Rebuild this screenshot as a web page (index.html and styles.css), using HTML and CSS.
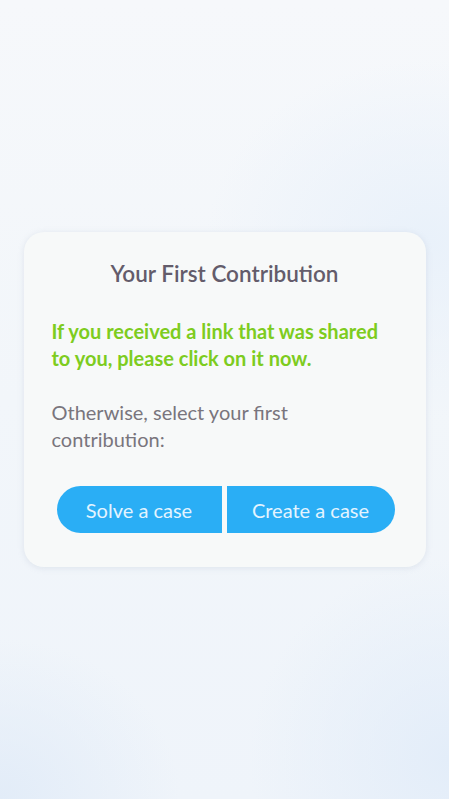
FILE: index.html
```html
<!DOCTYPE html>
<html lang="en">
<head>
<meta charset="utf-8">
<title>Your First Contribution</title>
<link rel="stylesheet" href="styles.css">
</head>
<body>
<main class="screen">
  <section class="card">
    <h1 class="title">Your First Contribution</h1>
    <p class="notice">If you received a link that was shared to you, please click on it now.</p>
    <p class="hint">Otherwise, select your first contribution:</p>
    <div class="actions">
      <button class="btn btn-left">Solve a case</button>
      <button class="btn btn-right">Create a case</button>
    </div>
  </section>
</main>
</body>
</html>
```

FILE: styles.css
```css
* { box-sizing: border-box; }
html, body { margin: 0; padding: 0; }
body {
  width: 449px;
  height: 799px;
  overflow: hidden;
  font-family: "Lato", "Open Sans", sans-serif;
  background:
    radial-gradient(ellipse 180px 160px at 0% 100%, #e2ecf8 0%, rgba(226,236,248,0) 100%),
    radial-gradient(ellipse 200px 200px at 100% 95%, #e3edf9 0%, rgba(227,237,249,0) 100%),
    radial-gradient(ellipse 220px 180px at 95% 30%, #e9f1fa 0%, rgba(233,241,250,0) 100%),
    linear-gradient(180deg, #f6f8fb 0%, #f2f6fa 50%, #eff4fa 100%);
}
.screen {
  height: 799px;
  display: flex;
  align-items: center;
  justify-content: center;
}
.card {
  width: 402px;
  background: #f7f9f9;
  border-radius: 20px;
  box-shadow: 0 1px 6px rgba(150, 165, 185, 0.22);
  padding: 28px 28px 34px 28px;
}
.title {
  margin: 0;
  text-align: center;
  font-size: 22.5px;
  line-height: 28px;
  font-weight: 600;
  color: #635c6b;
}
.notice {
  margin: 30px 0 0;
  font-size: 20px;
  line-height: 27px;
  font-weight: 700;
  color: #7dcc20;
}
.hint {
  margin: 27px 0 0;
  font-size: 20px;
  line-height: 27px;
  font-weight: 400;
  color: #79757d;
}
.actions {
  margin: 33px 0 0 5px;
  display: flex;
  gap: 5px;
}
.btn {
  border: 0;
  height: 47px;
  background: #2aaef5;
  color: #e3f4ff;
  font-family: inherit;
  font-size: 20px;
  font-weight: 400;
  padding: 0;
}
.btn-left {
  width: 165px;
  border-radius: 24px 0 0 24px;
}
.btn-right {
  width: 168px;
  border-radius: 0 24px 24px 0;
}
```
